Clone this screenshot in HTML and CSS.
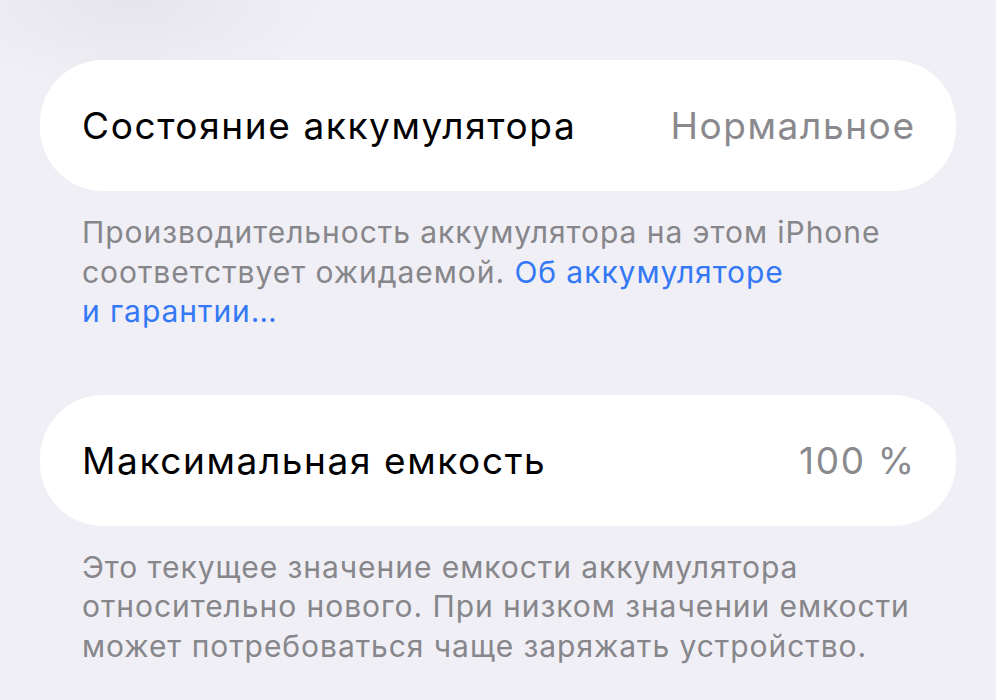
FILE: index.html
```html
<!DOCTYPE html>
<html lang="ru">
<head>
    <meta charset="UTF-8">
    <meta name="viewport" content="width=device-width, initial-scale=1.0">
    <title>Состояние аккумулятора</title>
    <link rel="stylesheet" href="styles.css">
</head>
<body>
    <div class="page">
        <!-- Battery health -->
        <div class="cell">
            <span class="cell-label">Состояние аккумулятора</span>
            <span class="cell-value">Нормальное</span>
        </div>
        <p class="footer">Производительность аккумулятора на этом iPhone соответствует ожидаемой. <a href="#">Об аккумуляторе и&nbsp;гарантии…</a></p>

        <!-- Maximum capacity -->
        <div class="cell">
            <span class="cell-label">Максимальная емкость</span>
            <span class="cell-value">100 %</span>
        </div>
        <p class="footer">Это текущее значение емкости аккумулятора относительно нового. При низком значении емкости может потребоваться чаще заряжать устройство.</p>
    </div>
</body>
</html>
```

FILE: styles.css
```css
body {
    margin: 0;
    background-color: #f0eff5;
    font-family: Inter, Roboto, "Liberation Sans", sans-serif;
    color: #000;
}
.page {
    padding: 60px 40px 0 40px;
    background: radial-gradient(ellipse 200px 90px at 130px 0px, #e6e5eb, rgba(240, 239, 245, 0));
    min-height: 700px;
    box-sizing: border-box;
}
/* Grouped cell */
.cell {
    display: flex;
    align-items: center;
    justify-content: space-between;
    height: 131px;
    padding: 0 42px;
    background-color: #fff;
    border-radius: 63px;
}
.cell-label,
.cell-value {
    font-size: 37px;
    letter-spacing: 1.6px;
}
.cell-value {
    margin-right: -1.6px;
    color: #8a8a8e;
}
/* Section footer */
.footer {
    margin: 22px 0 63px 0;
    padding: 0 42px;
    font-size: 30px;
    line-height: 39.5px;
    letter-spacing: 0.95px;
    color: #86868b;
}
.footer a {
    color: #3478f6;
    text-decoration: none;
}
```
